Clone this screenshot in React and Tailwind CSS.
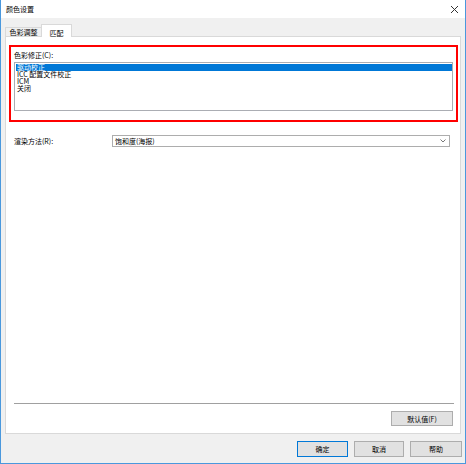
export default function App() {
  const font = { fontFamily: '"Noto Sans CJK SC", "Noto Sans", sans-serif' };
  return (
    <div
      className="w-[466px] h-[464px] border-x border-b border-[#4a98dd] flex flex-col bg-[#f0f0f0] text-[7px] leading-[8px] text-black"
      style={font}
    >
      {/* Title bar */}
      <div className="h-[18px] bg-white flex items-center justify-between pl-[5px] pr-[5px]">
        <span>颜色设置</span>
        <svg width="9" height="9" viewBox="0 0 9 9" className="mr-[1px]">
          <path d="M1 1 L8 8 M8 1 L1 8" stroke="#333" strokeWidth="1" />
        </svg>
      </div>

      {/* Body */}
      <div className="flex-1 flex flex-col px-[4px]">
        {/* Tabs */}
        <div className="h-[18px] flex items-end">
          <div className="h-[9px] w-[36px] bg-[#f0f0f0] border-t border-l border-[#d9d9d9] flex items-center justify-center">
            色彩调整
          </div>
          <div className="relative z-10 h-[13px] w-[31px] bg-white border-t border-x border-[#d9d9d9] -mb-[1px] flex items-center justify-center pt-[3px]">
            匹配
          </div>
        </div>

        {/* Panel */}
        <div className="h-[398px] bg-white border border-[#d9d9d9] flex flex-col pl-[3px] pr-[2px]">
          <div className="mt-[8px] h-[77px] border-2 border-[#ff0000] flex flex-col pl-[3px] pr-[3px]">
            <div className="h-[14px] flex items-center pt-[2px]">色彩修正(C):</div>
            <div className="mt-[1px] h-[49px] border border-[#abadb3] bg-white flex flex-col p-[1px] pr-0 leading-[7px]">
              <div className="bg-[#0078d7] text-white h-[7px] pl-[1px]">驱动校正</div>
              <div className="h-[7px] pl-[1px]">ICC 配置文件校正</div>
              <div className="h-[7px] pl-[1px]">ICM</div>
              <div className="h-[7px] pl-[1px]">关闭</div>
            </div>
          </div>

          <div className="mt-[13px] flex items-center pl-[5px]">
            <div className="w-[98px]">渲染方法(R):</div>
            <div className="w-[338px] h-[12px] border border-[#adadad] bg-white flex items-center justify-between pl-[2px] pr-[3px]">
              <span>饱和度(海报)</span>
              <svg width="6" height="4" viewBox="0 0 6 4">
                <path d="M0.5 0.5 L3 3 L5.5 0.5" stroke="#555" strokeWidth="0.8" fill="none" />
              </svg>
            </div>
          </div>

          <div className="flex-1" />

          <div className="ml-[5px] mr-[4px] h-[1px] bg-[#a0a0a0]" />
          <div className="mt-[7px] mb-[7px] flex justify-end pr-[5px]">
            <div className="w-[62px] h-[15px] bg-[#e1e1e1] border border-[#adadad] flex items-center justify-center">
              默认值(F)
            </div>
          </div>
        </div>

        {/* Bottom buttons */}
        <div className="mt-[7px] flex justify-end gap-[6px] -mr-[1px]">
          <div className="w-[51px] h-[16px] bg-[#e1e1e1] border border-[#0078d7] flex items-center justify-center">
            确定
          </div>
          <div className="w-[50px] h-[16px] bg-[#e1e1e1] border border-[#adadad] flex items-center justify-center">
            取消
          </div>
          <div className="w-[52px] h-[16px] bg-[#e1e1e1] border border-[#adadad] flex items-center justify-center">
            帮助
          </div>
        </div>
      </div>
    </div>
  );
}
